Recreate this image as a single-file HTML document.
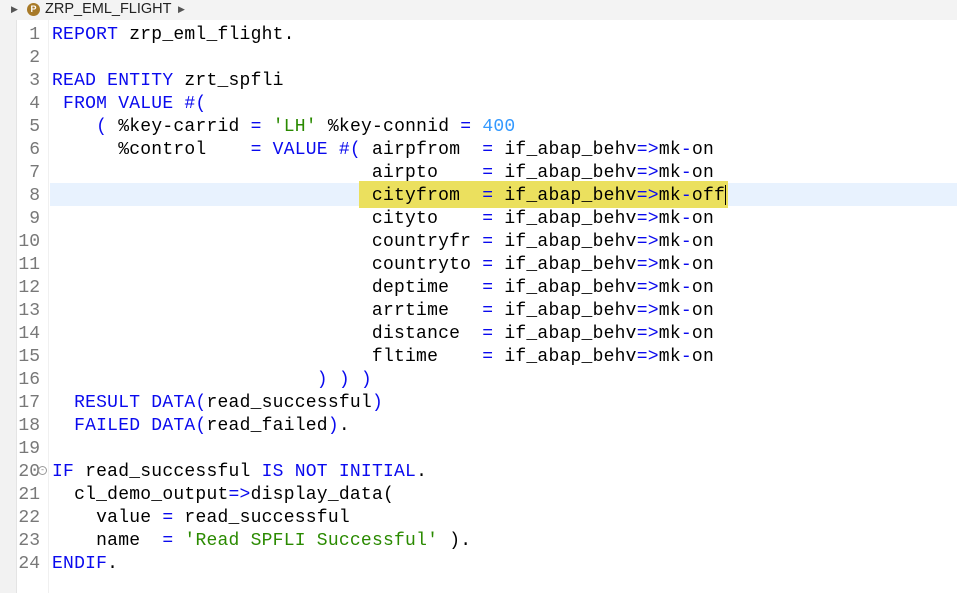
<!DOCTYPE html>
<html><head><meta charset="utf-8"><style>
body{margin:0;width:957px;height:593px;background:#fff;overflow:hidden;position:relative;font-family:"Liberation Mono",monospace;}
.hdr{position:absolute;left:0;top:0;width:957px;height:20px;background:#f3f3f3;font-family:"Liberation Sans",sans-serif;font-size:14px;color:#222;}
.strip{position:absolute;left:0;top:20px;width:16px;height:573px;background:#f2f2f2;border-right:1px solid #e4e4e4;}
.gl{position:absolute;left:48px;top:20px;width:1px;height:573px;background:#f0f0f0;}
.cur{position:absolute;left:50px;top:183px;width:907px;height:23px;background:#e8f2fe;}
.yel{position:absolute;left:359px;top:181px;width:369px;height:27px;background:#ebe05e;}
.caret{position:absolute;left:725px;top:185px;width:1px;height:20px;background:#000;}
.ln{position:absolute;left:16px;width:24px;text-align:right;font-size:18px;color:#787878;line-height:23px;}
.code{position:absolute;left:52px;top:24px;font-size:18px;line-height:23px;white-space:pre;color:#000;letter-spacing:0.23px;}
.k{color:#0a0aee}.s{color:#2a8a00}.n{color:#3399ff}
</style></head><body>
<div class="hdr">
<span style="position:absolute;left:11px;top:4px;font-size:9px;color:#555">&#9654;</span>
<span style="position:absolute;left:27px;top:3px;width:13px;height:13px;border-radius:50%;background:#a87a28;color:#fff;font-size:9px;font-weight:bold;text-align:center;line-height:13px">P</span>
<span style="position:absolute;left:45px;top:1px;font-size:14.5px">ZRP_EML_FLIGHT</span>
<span style="position:absolute;left:178px;top:4px;font-size:9px;color:#555">&#9654;</span>
</div>
<div class="strip"></div><div class="gl"></div>
<div class="cur"></div><div class="yel"></div><div class="caret"></div>
<div class="ln" style="top:24px">1<br>2<br>3<br>4<br>5<br>6<br>7<br>8<br>9<br>10<br>11<br>12<br>13<br>14<br>15<br>16<br>17<br>18<br>19<br>20<br>21<br>22<br>23<br>24</div>
<span style="position:absolute;left:38px;top:466px;width:7px;height:7px;border:1px solid #999;border-radius:50%;font-size:8px;line-height:7px;text-align:center;color:#777">-</span>
<div class="code"><span class="k">REPORT</span> zrp_eml_flight.

<span class="k">READ ENTITY</span> zrt_spfli
 <span class="k">FROM VALUE #(</span>
    <span class="k">(</span> %key-carrid <span class="k">=</span> <span class="s">'LH'</span> %key-connid <span class="k">=</span> <span class="n">400</span>
      %control    <span class="k">=</span> <span class="k">VALUE #(</span> airpfrom  <span class="k">=</span> if_abap_behv<span class="k">=&gt;</span>mk<span class="k">-</span>on
                             airpto    <span class="k">=</span> if_abap_behv<span class="k">=&gt;</span>mk<span class="k">-</span>on
                             cityfrom  <span class="k">=</span> if_abap_behv<span class="k">=&gt;</span>mk<span class="k">-</span>off
                             cityto    <span class="k">=</span> if_abap_behv<span class="k">=&gt;</span>mk<span class="k">-</span>on
                             countryfr <span class="k">=</span> if_abap_behv<span class="k">=&gt;</span>mk<span class="k">-</span>on
                             countryto <span class="k">=</span> if_abap_behv<span class="k">=&gt;</span>mk<span class="k">-</span>on
                             deptime   <span class="k">=</span> if_abap_behv<span class="k">=&gt;</span>mk<span class="k">-</span>on
                             arrtime   <span class="k">=</span> if_abap_behv<span class="k">=&gt;</span>mk<span class="k">-</span>on
                             distance  <span class="k">=</span> if_abap_behv<span class="k">=&gt;</span>mk<span class="k">-</span>on
                             fltime    <span class="k">=</span> if_abap_behv<span class="k">=&gt;</span>mk<span class="k">-</span>on
                        <span class="k">) ) )</span>
  <span class="k">RESULT DATA(</span>read_successful<span class="k">)</span>
  <span class="k">FAILED DATA(</span>read_failed<span class="k">)</span>.

<span class="k">IF</span> read_successful <span class="k">IS NOT INITIAL</span>.
  cl_demo_output<span class="k">=&gt;</span>display_data(
    value <span class="k">=</span> read_successful
    name  <span class="k">=</span> <span class="s">'Read SPFLI Successful'</span> ).
<span class="k">ENDIF</span>.</div>
</body></html>
